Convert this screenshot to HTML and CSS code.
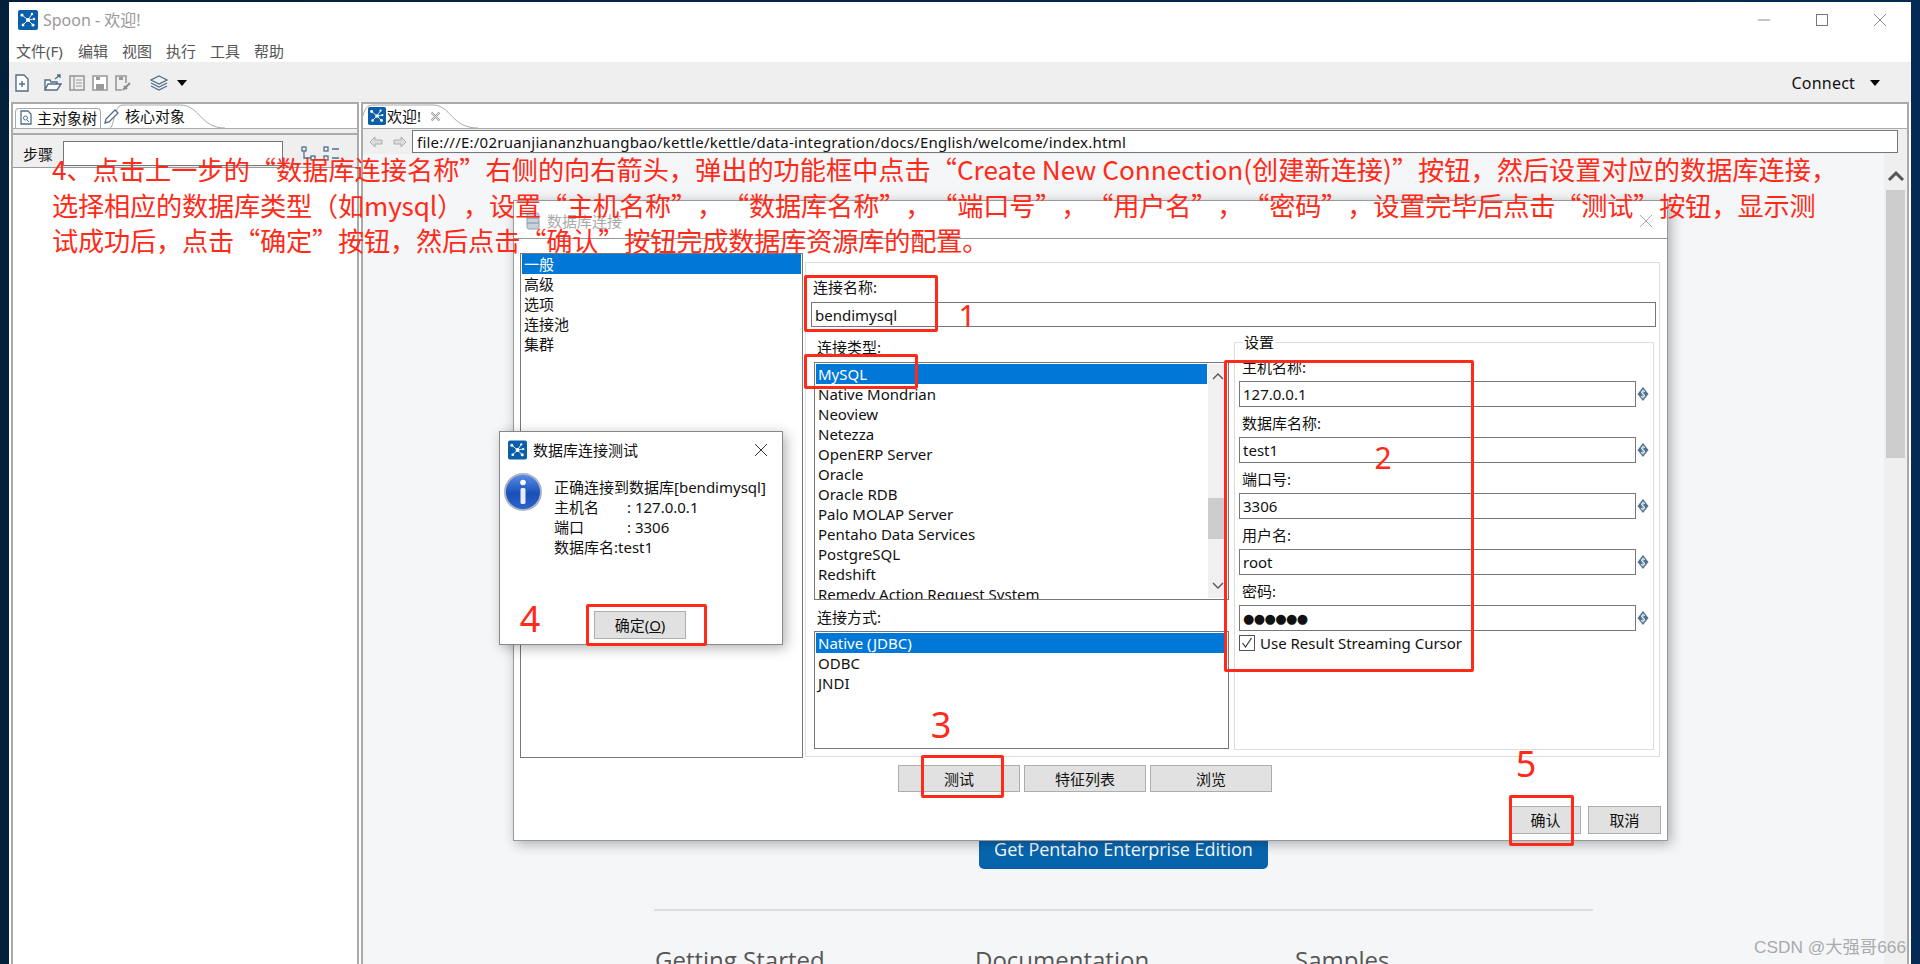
FILE: index.html
```html
<!DOCTYPE html>
<html lang="zh-CN">
<head>
    <meta charset="UTF-8">
    <title>Spoon - 欢迎!</title>
    <link rel="stylesheet" href="styles.css">
</head>
<body>
    <svg class="defs" width="0" height="0">
        <symbol id="logo" viewBox="0 0 20 20">
            <rect width="20" height="20" rx="2" fill="#0b5ea8"/>
            <g stroke="#fff" stroke-width=".9">
                <path d="M10 10 L4 5 M10 10 L14 4 M10 10 L16 9 M10 10 L15 15 M10 10 L5 15"/>
            </g>
            <g fill="#fff">
                <circle cx="10" cy="10" r="2"/>
                <circle cx="4" cy="5" r="1.6"/>
                <circle cx="14" cy="4" r="1.2"/>
                <circle cx="16" cy="9" r="1.2"/>
                <circle cx="15" cy="15" r="1.6"/>
                <circle cx="5" cy="15" r="1.4"/>
            </g>
        </symbol>
        <symbol id="var" viewBox="0 0 12 16">
            <path d="M6 1 L11.5 8 L6 15 L0.5 8 Z" fill="#4f7391"/>
            <path d="M8 5.5 Q6 4 4.6 5.6 Q4.4 7.6 6 8 Q8 8.6 7.6 10.4 Q6 12 4 10.5" fill="none" stroke="#fff" stroke-width="1"/>
            <path d="M6 3.6 V12.4" stroke="#fff" stroke-width=".7"/>
        </symbol>
        <linearGradient id="orb" x1="0" y1="0" x2="0" y2="1">
            <stop offset="0" stop-color="#5b8fe6"/>
            <stop offset=".55" stop-color="#1a4fb8"/>
            <stop offset="1" stop-color="#2c66cc"/>
        </linearGradient>
    </svg>

    <div class="window">
        <div class="titlebar">
            <svg class="title-logo"><use href="#logo"/></svg>
            <span class="title-text">Spoon - 欢迎!</span>
            <div class="win-buttons">
                <svg width="14" height="14" viewBox="0 0 14 14"><path d="M1 7 H13" stroke="#888"/></svg>
                <svg width="14" height="14" viewBox="0 0 14 14"><rect x="1.5" y="1.5" width="11" height="11" fill="none" stroke="#777"/></svg>
                <svg width="14" height="14" viewBox="0 0 14 14"><path d="M1 1 L13 13 M13 1 L1 13" stroke="#888"/></svg>
            </div>
        </div>
        <div class="menubar">
            <span>文件(F)</span><span>编辑</span><span>视图</span><span>执行</span><span>工具</span><span>帮助</span>
        </div>
        <div class="toolbar">
            <svg class="tool tool-new" width="14" height="18" viewBox="0 0 14 18"><path d="M1 1 H9 L13 5 V17 H1 Z" fill="#fff" stroke="#4f6f8a" stroke-width="1.4"/><path d="M7 7 V13 M4 10 H10" stroke="#4f6f8a" stroke-width="1.4"/></svg>
            <svg class="tool tool-open" width="18" height="18" viewBox="0 0 18 18"><path d="M1 16 V6 H6 L7 8 H13 V10 M1 16 L4 10 H17 L13 16 Z" fill="#fff" stroke="#4f6f8a" stroke-width="1.4"/><path d="M11 5 L16 1 M13 1 H16 V4" fill="none" stroke="#4f6f8a" stroke-width="1.3"/></svg>
            <svg class="tool" width="16" height="16" viewBox="0 0 16 16"><rect x="1" y="1" width="14" height="14" fill="none" stroke="#999" stroke-width="1.6"/><path d="M5 1 V15 M7 5 H13 M7 8 H13 M7 11 H13" stroke="#999" stroke-width="1.2"/></svg>
            <svg class="tool" width="16" height="16" viewBox="0 0 16 16"><path d="M1 1 H15 V15 H1 Z" fill="#fff" stroke="#999" stroke-width="1.6"/><rect x="4" y="9" width="8" height="6" fill="#999"/><rect x="4" y="2" width="4" height="3" fill="#999"/></svg>
            <svg class="tool" width="16" height="16" viewBox="0 0 16 16"><path d="M11 8 V1 H1 V15 H7" fill="none" stroke="#999" stroke-width="1.6"/><rect x="4" y="2" width="4" height="3" fill="#999"/><path d="M8 15 L15 8 M9 11 L12 14" stroke="#8a8a8a" stroke-width="2"/></svg>
            <svg class="tool tool-layers" width="18" height="16" viewBox="0 0 18 16"><path d="M9 1 L17 5 L9 9 L1 5 Z" fill="none" stroke="#4f6f8a" stroke-width="1.2"/><path d="M1 8 L9 12 L17 8 M1 11 L9 15 L17 11" fill="none" stroke="#4f6f8a" stroke-width="1.2"/></svg>
            <span class="caret tool-caret"></span>
            <span class="connect">Connect</span>
            <span class="caret connect-caret"></span>
        </div>
        <div class="panels">
            <div class="side-panel">
                <div class="tabstrip">
                    <svg class="tab-curve" width="240" height="24" viewBox="0 0 240 24"><path d="M87 24 C91 24 91 1 99 1 H157 C177 1 177 24 202 24" fill="#fff" stroke="#aaa"/></svg>
                    <div class="tab tab-active">
                        <svg width="12" height="15" viewBox="0 0 12 15"><path d="M1 1 H8 L11 4 V14 H1 Z" fill="#fff" stroke="#4f6f8a" stroke-width="1.3"/><circle cx="5.5" cy="8" r="2" fill="none" stroke="#4f6f8a"/><path d="M7 10 L9 12" stroke="#4f6f8a"/></svg>
                        <span>主对象树</span>
                    </div>
                    <div class="tab tab-second">
                        <svg width="15" height="15" viewBox="0 0 15 15"><path d="M1 14 L2 10 L11 1 L14 4 L5 13 Z" fill="#fff" stroke="#4f6f8a" stroke-width="1.3"/></svg>
                        <span>核心对象</span>
                    </div>
                </div>
                <div class="strip-band"></div>
                <div class="step-row">
                    <span class="step-label">步骤</span>
                    <div class="step-input"></div>
                    <svg class="step-tree" width="15" height="16" viewBox="0 0 15 16"><rect x="1" y="1" width="4" height="4" fill="none" stroke="#4f6f8a" stroke-width="1.3"/><rect x="10" y="10" width="4" height="4" fill="none" stroke="#4f6f8a" stroke-width="1.3"/><path d="M3 5 V12 H10" fill="none" stroke="#4f6f8a" stroke-width="1.3"/></svg>
                    <svg class="step-list" width="17" height="16" viewBox="0 0 17 16"><rect x="1" y="1" width="4" height="4" fill="none" stroke="#4f6f8a" stroke-width="1.3"/><rect x="1" y="10" width="4" height="4" fill="none" stroke="#4f6f8a" stroke-width="1.3"/><path d="M9 3 H16 M9 12 H16" stroke="#4f6f8a" stroke-width="1.3"/></svg>
                </div>
                <div class="side-tree"></div>
            </div>
            <div class="main-panel">
                <div class="tabstrip">
                    <svg class="tab-curve welcome-curve" width="140" height="24" viewBox="0 0 140 24"><path d="M0 12 C2 2 6 1 12 1 H70 C88 1 88 24 115 24" fill="#fff" stroke="#aaa"/></svg>
                    <div class="tab tab-welcome">
                        <svg class="tab-logo"><use href="#logo"/></svg>
                        <span>欢迎!</span>
                        <svg class="tab-close" width="11" height="11" viewBox="0 0 11 11"><path d="M1.5 1.5 L9.5 9.5 M9.5 1.5 L1.5 9.5" stroke="#999" stroke-width="2"/><path d="M1.5 1.5 L9.5 9.5 M9.5 1.5 L1.5 9.5" stroke="#fff" stroke-width=".7"/></svg>
                    </div>
                </div>
                <div class="url-row">
                    <svg class="nav-back" width="14" height="12" viewBox="0 0 14 12"><path d="M6 1 L1 6 L6 11 V8 H13 V4 H6 Z" fill="#ddd" stroke="#aaa"/></svg>
                    <svg class="nav-fwd" width="14" height="12" viewBox="0 0 14 12"><path d="M8 1 L13 6 L8 11 V8 H1 V4 H8 Z" fill="#ddd" stroke="#aaa"/></svg>
                    <div class="url-input">file:///E:/02ruanjiananzhuangbao/kettle/kettle/data-integration/docs/English/welcome/index.html</div>
                </div>
                <div class="browser">
                    <div class="welcome-page">
                        <div class="enterprise-btn">Get Pentaho Enterprise Edition</div>
                        <div class="welcome-links">
                            <h2>Getting Started</h2>
                            <h2>Documentation</h2>
                            <h2>Samples</h2>
                        </div>
                    </div>
                    <div class="page-scroll">
                        <svg width="18" height="12" viewBox="0 0 18 12"><path d="M2 10 L9 3 L16 10" fill="none" stroke="#555" stroke-width="3"/></svg>
                        <div class="page-thumb"></div>
                    </div>
                </div>
            </div>
        </div>
    </div>

    <div class="dialog db-dialog">
        <div class="dialog-title">
            <svg width="14" height="18" viewBox="0 0 14 18"><rect x="1" y="1" width="12" height="16" rx="2" fill="#c8d2dc" stroke="#8fa2b4"/><path d="M1 6 H13 M1 11 H13" stroke="#7d92a6"/></svg>
            <span>数据库连接</span>
            <svg class="dialog-x" width="14" height="14" viewBox="0 0 14 14"><path d="M1 1 L13 13 M13 1 L1 13" stroke="#aaa"/></svg>
        </div>
        <div class="dialog-body">
            <div class="cat-list">
                <div class="row selected">一般</div>
                <div class="row">高级</div>
                <div class="row">选项</div>
                <div class="row">连接池</div>
                <div class="row">集群</div>
            </div>
            <div class="pane">
                <div class="name-label">连接名称:</div>
                <div class="textbox name-box">bendimysql</div>
                <div class="pane-cols">
                    <div class="type-col">
                        <div class="col-label">连接类型:</div>
                        <div class="listbox type-list">
                            <div class="rows">
                                <div class="row selected">MySQL</div>
                                <div class="row">Native Mondrian</div>
                                <div class="row">Neoview</div>
                                <div class="row">Netezza</div>
                                <div class="row">OpenERP Server</div>
                                <div class="row">Oracle</div>
                                <div class="row">Oracle RDB</div>
                                <div class="row">Palo MOLAP Server</div>
                                <div class="row">Pentaho Data Services</div>
                                <div class="row">PostgreSQL</div>
                                <div class="row">Redshift</div>
                                <div class="row">Remedy Action Request System</div>
                            </div>
                            <div class="list-scroll">
                                <svg width="12" height="8" viewBox="0 0 12 8"><path d="M1 7 L6 2 L11 7" fill="none" stroke="#555" stroke-width="1.4"/></svg>
                                <div class="list-thumb"></div>
                                <svg class="down" width="12" height="8" viewBox="0 0 12 8"><path d="M1 1 L6 6 L11 1" fill="none" stroke="#555" stroke-width="1.4"/></svg>
                            </div>
                        </div>
                        <div class="col-label method-label">连接方式:</div>
                        <div class="listbox method-list">
                            <div class="rows">
                                <div class="row selected">Native (JDBC)</div>
                                <div class="row">ODBC</div>
                                <div class="row">JNDI</div>
                            </div>
                        </div>
                    </div>
                    <div class="settings">
                        <span class="settings-title">设置</span>
                        <div class="field">
                            <div class="field-label">主机名称:</div>
                            <div class="field-row"><div class="textbox">127.0.0.1</div><svg class="var-icon"><use href="#var"/></svg></div>
                        </div>
                        <div class="field">
                            <div class="field-label">数据库名称:</div>
                            <div class="field-row"><div class="textbox">test1</div><svg class="var-icon"><use href="#var"/></svg></div>
                        </div>
                        <div class="field">
                            <div class="field-label">端口号:</div>
                            <div class="field-row"><div class="textbox">3306</div><svg class="var-icon"><use href="#var"/></svg></div>
                        </div>
                        <div class="field">
                            <div class="field-label">用户名:</div>
                            <div class="field-row"><div class="textbox">root</div><svg class="var-icon"><use href="#var"/></svg></div>
                        </div>
                        <div class="field">
                            <div class="field-label">密码:</div>
                            <div class="field-row"><div class="textbox password">●●●●●●</div><svg class="var-icon"><use href="#var"/></svg></div>
                        </div>
                        <div class="check-row">
                            <svg width="16" height="16" viewBox="0 0 16 16"><rect x=".5" y=".5" width="15" height="15" fill="#fff" stroke="#555"/><path d="M3.5 8 L6.5 12 L12.5 3" fill="none" stroke="#333" stroke-width="1.2"/></svg>
                            <span>Use Result Streaming Cursor</span>
                        </div>
                    </div>
                </div>
            </div>
        </div>
        <div class="test-buttons">
            <div class="btn">测试</div>
            <div class="btn">特征列表</div>
            <div class="btn">浏览</div>
        </div>
        <div class="ok-buttons">
            <div class="btn btn-ok">确认</div>
            <div class="btn btn-cancel">取消</div>
        </div>
    </div>

    <div class="dialog test-dialog">
        <div class="test-title">
            <svg class="test-logo"><use href="#logo"/></svg>
            <span>数据库连接测试</span>
            <svg class="dialog-x" width="14" height="14" viewBox="0 0 14 14"><path d="M1 1 L13 13 M13 1 L1 13" stroke="#333"/></svg>
        </div>
        <div class="test-body">
            <svg class="info-icon" width="38" height="38" viewBox="0 0 38 38">
                <circle cx="19" cy="19" r="18" fill="url(#orb)" stroke="#aab4c2" stroke-width="2"/>
                <circle cx="19" cy="9.5" r="2.8" fill="#fff"/>
                <rect x="16.5" y="15" width="5" height="16" rx="1.5" fill="#e8eefa"/>
            </svg>
            <div class="test-lines">
                <div>正确连接到数据库[bendimysql]</div>
                <div class="kv"><span class="key">主机名</span><span>: 127.0.0.1</span></div>
                <div class="kv"><span class="key">端口</span><span>: 3306</span></div>
                <div>数据库名:test1</div>
            </div>
        </div>
        <div class="test-actions">
            <div class="btn btn-confirm">确定(<u>O</u>)</div>
        </div>
    </div>

    <div class="notes">
        <div>4、点击上一步的“数据库连接名称”右侧的向右箭头，弹出的功能框中点击“Create New Connection(创建新连接)”按钮，然后设置对应的数据库连接，</div>
        <div class="note-tight">选择相应的数据库类型（如mysql），设置“主机名称”，“数据库名称”，“端口号”，“用户名”，“密码”，设置完毕后点击“测试”按钮，显示测</div>
        <div class="note-tight">试成功后，点击“确定”按钮，然后点击“确认”按钮完成数据库资源库的配置。</div>
    </div>

    <div class="mark mark-name"></div>
    <div class="mark mark-mysql"></div>
    <div class="mark mark-fields"></div>
    <div class="mark mark-test"></div>
    <div class="mark mark-confirm"></div>
    <div class="mark mark-ok"></div>
    <span class="step-no no-1">1</span>
    <span class="step-no no-2">2</span>
    <span class="step-no no-3">3</span>
    <span class="step-no no-4">4</span>
    <span class="step-no no-5">5</span>

    <div class="watermark">CSDN @大强哥666</div>
</body>
</html>
```

FILE: styles.css
```css
* {
    box-sizing: border-box;
}

html, body {
    height: 964px;
    overflow: hidden;
}

body {
    margin: 0;
    padding: 2px 9px 0;
    position: relative;
    background: linear-gradient(to right, #02203c, #032b55);
    font-family: "Noto Sans", "Noto Sans CJK SC", sans-serif;
    font-size: 15px;
    line-height: 20px;
    color: #111;
}

.defs {
    position: absolute;
}

.window {
    height: 962px;
    display: flex;
    flex-direction: column;
    background: #fff;
}

.titlebar {
    height: 36px;
    flex: none;
    display: flex;
    align-items: center;
    padding-left: 9px;
}

.title-logo {
    width: 20px;
    height: 20px;
}

.title-text {
    margin-left: 5px;
    color: #999;
    font-size: 16px;
}

.win-buttons {
    margin-left: auto;
    display: flex;
    gap: 44px;
    padding-right: 24px;
}

.menubar {
    height: 24px;
    flex: none;
    display: flex;
    gap: 14px;
    padding: 3px 0 0 7px;
    color: #555;
}

.menubar span:first-child {
    width: 48px;
}

.toolbar {
    height: 40px;
    flex: none;
    display: flex;
    align-items: center;
    background: #efefef;
    padding: 2px 0 0 6px;
}

.tool {
    margin-right: 7px;
}

.tool-new {
    margin-right: 15px;
}

.tool-layers {
    margin-left: 12px;
    margin-right: 9px;
}

.caret {
    width: 0;
    height: 0;
    border-left: 5px solid transparent;
    border-right: 5px solid transparent;
    border-top: 6px solid #000;
}

.connect {
    margin-left: auto;
    font-size: 16px;
    letter-spacing: .2px;
}

.connect-caret {
    margin-left: 15px;
    margin-right: 31px;
}

.panels {
    flex: 1;
    min-height: 0;
    display: flex;
    gap: 2px;
    padding: 0 2px;
}

.side-panel {
    width: 348px;
    flex: none;
    display: flex;
    flex-direction: column;
    border: 2px solid #aaa;
    border-bottom: none;
}

.main-panel {
    flex: 1;
    min-width: 0;
    display: flex;
    flex-direction: column;
    border: 2px solid #aaa;
    border-bottom: none;
}

.tabstrip {
    height: 25px;
    flex: none;
    position: relative;
    display: flex;
    background: #fff;
    border-bottom: 1px solid #aaa;
    border-top-right-radius: 8px;
}

.tab-curve {
    position: absolute;
    left: 10px;
    top: 0;
}

.welcome-curve {
    left: 0;
}

.tab {
    position: relative;
    display: flex;
    align-items: center;
    height: 24px;
}

.tab-active {
    margin: 4px 0 0 2px;
    height: 20px;
    width: 86px;
    gap: 5px;
    padding: 0 0 2px 4px;
    border: 1px solid #aaa;
    border-bottom: none;
    border-radius: 4px 4px 0 0;
    background: #fff;
}

.tab-second {
    margin-left: 3px;
    gap: 6px;
}

.tab-welcome {
    padding-left: 4px;
}

.tab-logo {
    width: 20px;
    height: 18px;
}

.tab-close {
    margin-left: 9px;
}

.strip-band {
    height: 6px;
    flex: none;
    background: #efefef;
    border-bottom: 2px solid #aaa;
}

.step-row {
    height: 33px;
    flex: none;
    display: flex;
    align-items: center;
    background: #efefef;
    border-bottom: 1px solid #999;
    padding: 5px 0 0 10px;
}

.step-label {
    width: 40px;
}

.step-input {
    width: 220px;
    height: 25px;
    background: #fff;
    border: 1px solid #777;
}

.step-tree {
    margin-left: 18px;
}

.step-list {
    margin-left: 7px;
}

.side-tree {
    flex: 1;
    background: #fff;
}

.url-row {
    height: 25px;
    flex: none;
    display: flex;
    align-items: center;
    background: #efefef;
}

.nav-back {
    margin-left: 6px;
}

.nav-fwd {
    margin-left: 10px;
}

.url-input {
    margin-left: 5px;
    width: 1486px;
    height: 23px;
    line-height: 23px;
    padding-left: 4px;
    background: #fff;
    border: 1px solid #777;
    letter-spacing: .23px;
    white-space: nowrap;
}

.browser {
    flex: 1;
    min-height: 0;
    display: flex;
    background: #f5f6f8;
    overflow: hidden;
}

.welcome-page {
    flex: 1;
    padding: 671px 0 0;
    display: flex;
    flex-direction: column;
    align-items: center;
}

.enterprise-btn {
    width: 289px;
    height: 44px;
    flex: none;
    border-radius: 0 0 5px 5px;
    background: linear-gradient(#0b72c0, #0560a8);
    color: #fff;
    font-family: "Open Sans", sans-serif;
    font-size: 18px;
    line-height: 48px;
    text-align: center;
}

.welcome-links {
    width: 939px;
    flex: none;
    margin-top: 40px;
    padding-top: 33px;
    border-top: 2px solid #dcdde0;
    display: grid;
    grid-template-columns: 320px 320px 1fr;
}

.welcome-links h2 {
    margin: 0;
    padding-left: 1px;
    font-family: "Open Sans", sans-serif;
    font-weight: 400;
    font-size: 24px;
    line-height: 32px;
    color: #555;
}

.page-scroll {
    width: 23px;
    flex: none;
    display: flex;
    flex-direction: column;
    align-items: center;
    background: #efefef;
    padding-top: 16px;
}

.page-thumb {
    width: 19px;
    height: 268px;
    margin-top: 8px;
    background: #cdcdcd;
}

/* dialogs sit on top of the spoon window */
.dialog {
    position: absolute;
    background: #fff;
    box-shadow: 3px 3px 12px rgba(0, 0, 0, .3);
}

.db-dialog {
    left: 513px;
    top: 200px;
    width: 1155px;
    height: 641px;
    border: 1px solid #999;
}

.dialog-title {
    height: 38px;
    display: flex;
    align-items: center;
    gap: 7px;
    padding: 2px 0 0 12px;
    border-bottom: 1px solid #999;
    color: #aaa;
}

.dialog-x {
    margin-left: auto;
    margin-right: 14px;
}

.dialog-body {
    display: flex;
    gap: 2px;
    height: 519px;
    padding: 14px 0 0 6px;
}

.cat-list {
    width: 283px;
    height: 505px;
    border: 1px solid #777;
    padding: 0 1px;
}

.row {
    height: 20px;
    line-height: 20px;
    padding-left: 2px;
    white-space: nowrap;
}

.row.selected {
    background: #0078d7;
    color: #fff;
}

.pane {
    width: 855px;
    height: 495px;
    margin-top: 9px;
    padding-left: 5px;
    border: 1px solid #ddd;
}

.name-label {
    height: 39px;
    padding: 14px 0 0 2px;
}

.textbox {
    height: 26px;
    line-height: 25px;
    padding-left: 3px;
    border: 1px solid #777;
    background: #fff;
    white-space: nowrap;
}

.name-box {
    width: 845px;
    height: 25px;
    line-height: 24px;
}

.pane-cols {
    display: flex;
    gap: 5px;
    padding-left: 3px;
}

.type-col {
    width: 415px;
    flex: none;
}

.col-label {
    padding: 10px 0 5px 3px;
}

.method-label {
    padding: 7px 0 4px 3px;
}

.listbox {
    display: flex;
    border: 1px solid #777;
    padding: 1px;
    overflow: hidden;
    background: #fff;
}

.type-list {
    height: 238px;
}

.method-list {
    height: 118px;
}

.rows {
    flex: 1;
    min-width: 0;
}

.list-scroll {
    width: 19px;
    flex: none;
    margin-left: 1px;
    position: relative;
    display: flex;
    flex-direction: column;
    align-items: center;
    background: #f0f0f0;
    padding-top: 8px;
}

.list-thumb {
    width: 100%;
    height: 41px;
    margin-top: 118px;
    background: #cdcdcd;
}

.list-scroll .down {
    margin-top: 43px;
}

.settings {
    position: relative;
    width: 420px;
    height: 408px;
    margin-top: 15px;
    padding: 14px 0 0 4px;
    border: 1px solid #ddd;
}

.settings-title {
    position: absolute;
    left: 8px;
    top: -11px;
    padding: 0 1px;
    background: #fff;
}

.field {
    margin-bottom: 6px;
}

.field-label {
    padding: 0 0 4px 3px;
}

.field-row {
    display: flex;
    align-items: center;
}

.field-row .textbox {
    width: 397px;
}

.textbox.password {
    font-family: "DejaVu Sans", sans-serif;
    font-size: 13px;
    letter-spacing: -.6px;
}

.var-icon {
    width: 12px;
    height: 16px;
    margin-left: 1px;
}

.check-row {
    display: flex;
    align-items: center;
    gap: 5px;
    margin-top: -4px;
}

.btn {
    height: 27px;
    line-height: 27px;
    text-align: center;
    background: #e1e1e1;
    border: 1px solid #adadad;
}

.test-buttons {
    display: flex;
    gap: 4px;
    padding-left: 384px;
    margin-top: 7px;
}

.test-buttons .btn {
    width: 122px;
}

.ok-buttons {
    display: flex;
    justify-content: flex-end;
    gap: 7px;
    padding-right: 6px;
    margin-top: 14px;
}

.btn-ok {
    width: 71px;
    height: 28px;
}

.btn-cancel {
    width: 73px;
    height: 28px;
}

.test-dialog {
    left: 499px;
    top: 431px;
    width: 284px;
    height: 214px;
    border: 1px solid #888;
    display: flex;
    flex-direction: column;
}

.test-title {
    height: 36px;
    flex: none;
    display: flex;
    align-items: center;
    padding-left: 8px;
    gap: 6px;
}

.test-logo {
    width: 19px;
    height: 20px;
}

.test-title .dialog-x {
    margin-right: 14px;
}

.test-body {
    display: flex;
    padding: 5px 0 0 4px;
    height: 143px;
    flex: none;
}

.info-icon {
    flex: none;
}

.test-lines {
    margin-left: 12px;
    padding-top: 4px;
    white-space: nowrap;
}

.kv {
    display: flex;
}

.key {
    width: 73px;
}

.test-actions {
    padding-left: 94px;
}

.btn-confirm {
    width: 92px;
    height: 28px;
}

/* red annotations drawn over the screenshot */
.notes {
    position: absolute;
    left: 52px;
    top: 152px;
    font-family: "Noto Sans CJK SC", sans-serif;
    font-size: 26.2px;
    line-height: 35.5px;
    color: #ff2a18;
    white-space: nowrap;
    text-spacing-trim: space-all;
}

.note-tight {
    letter-spacing: -.18px;
}

.mark {
    position: absolute;
    border: 3px solid #ff2a18;
    border-radius: 2px;
}

.mark-name {
    left: 804px;
    top: 275px;
    width: 134px;
    height: 57px;
}

.mark-mysql {
    left: 804px;
    top: 354px;
    width: 114px;
    height: 35px;
}

.mark-fields {
    left: 1224px;
    top: 360px;
    width: 250px;
    height: 312px;
}

.mark-test {
    left: 921px;
    top: 755px;
    width: 83px;
    height: 43px;
}

.mark-confirm {
    left: 586px;
    top: 604px;
    width: 121px;
    height: 42px;
}

.mark-ok {
    left: 1509px;
    top: 795px;
    width: 65px;
    height: 51px;
}

.step-no {
    position: absolute;
    transform: translate(-50%, -50%);
    font-family: "Noto Sans", sans-serif;
    font-size: 36px;
    line-height: 40px;
    color: #ff2a18;
}

.no-1 {
    left: 967px;
    top: 316px;
    font-size: 30px;
}

.no-2 {
    left: 1383px;
    top: 458px;
    font-size: 30px;
}

.no-3 {
    left: 941px;
    top: 725px;
}

.no-4 {
    left: 530px;
    top: 619px;
}

.no-5 {
    left: 1526px;
    top: 764px;
}

.watermark {
    position: absolute;
    left: 1754px;
    top: 936px;
    font-family: "Liberation Sans", "Noto Sans CJK SC", sans-serif;
    font-size: 17.3px;
    line-height: 22px;
    color: #aaa;
    white-space: nowrap;
}
```
